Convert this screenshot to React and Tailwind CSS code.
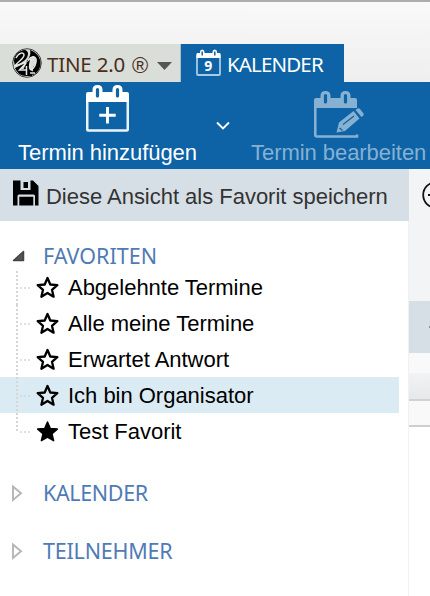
const ARIAL = "font-['Liberation_Sans',Arial,sans-serif]";
const TAHOMA = "font-['Noto_Sans',Tahoma,sans-serif]";

function Logo() {
  return (
    <svg className="ml-3 h-[30px] w-[30px] shrink-0" viewBox="0 0 30 30" fill="none">
      <circle cx="15" cy="15" r="14.3" fill="#d9ded8" stroke="#3b3f3b" strokeWidth="1" />
      <path d="M2 13C2 7 7 2 13 2C17 3 17 8 13 12L6 17L3 18Z" fill="#000" />
      <path d="M18 2C25 4 28.500 10 28.500 15C28.500 21 25 25 21 27L21 19C25 15 25 9 21 8L14 14C18 9 19 6 18 2Z" fill="#000" />
      <path d="M3 20L13 15L9 21H14V28C9 28 5 25 3 20Z" fill="#000" />
      <path d="M15 14L18 12V22L22 24L20 28H14L15 22H11Z" fill="#000" />
      <path d="M4 10C7 4 12 4 12 7C12 11 6 13 3 18L13 14.500M16 12C20 7 25 8 24 14C23 19 20 23 18 21C17 18 18 13 20 11M14 15L7.500 22H15M14.500 18V27M18 25H23" stroke="#e4e8e3" strokeWidth="1.500" />
    </svg>
  );
}

function SmallCalendar() {
  return (
    <svg className="ml-[15px] h-[28px] w-[25px] shrink-0" viewBox="0 0 25 28" fill="none">
      <rect x="1" y="6" width="23" height="20" rx="1" stroke="#a9cbe2" strokeWidth="1.800" />
      <path d="M0.500 5Q.5 4 1.500 4H4V3Q4 .5 6.200 .5T8.500 3V4H16.500V3Q16.500 .5 18.800 .5T21 3V4H23.500Q24.500 4 24.500 5V9H.5Z" fill="#fff" />
      <path d="M6.200 2.500V6.500M18.800 2.500V6.500" stroke="#0d63a6" strokeWidth="1.500" />
      <text x="12.200" y="21.500" textAnchor="middle" fill="#fff" fontFamily="Open Sans" fontWeight="700" fontSize="14">9</text>
    </svg>
  );
}

const CAL_TOP = "M0 9Q0 7 2 7H6.500V5Q6.500 0 11.500 0T16.500 5V7H26.500V5Q26.500 0 31.500 0T36.500 5V7H41Q43 7 43 9V17H0Z";

function CalendarAdd() {
  return (
    <svg className="h-[47px] w-[43px]" viewBox="0 0 43 47" fill="none">
      <rect x="1.200" y="10" width="40.600" height="35.500" rx="1.500" stroke="#eaf3f9" strokeWidth="2.600" />
      <path d={CAL_TOP} fill="#fff" />
      <path d="M11.500 4.500V11M31.500 4.500V11" stroke="#0d63a6" strokeWidth="3.200" strokeLinecap="round" />
      <path d="M21.500 22V38.500M13.300 30.200H29.700" stroke="#fff" strokeWidth="2.900" />
    </svg>
  );
}

function CalendarEdit() {
  return (
    <svg className="h-[47px] w-[50px]" viewBox="0 0 50 47" fill="none">
      <path d="M1.300 10V44Q1.300 45.500 3 45.500H43V43.500" stroke="#86b1d2" strokeWidth="2.600" />
      <path d={CAL_TOP} fill="#86b1d2" />
      <path d="M11.500 4.500V11M31.500 4.500V11" stroke="#0d63a6" strokeWidth="3.200" strokeLinecap="round" />
      <path d="M25 31.500L39.500 20L45.500 27.500L31 40L22.500 41.500Z" fill="#86b1d2" />
      <path d="M41.500 19L43.500 17.500Q45 17 46 18L49.500 22.500Q50 24 49 25L47.500 26Z" fill="#86b1d2" />
      <path d="M29 33.500L40 25M25.500 37L28.500 39.500" stroke="#0d63a6" strokeWidth="1.200" />
    </svg>
  );
}

function SaveIcon() {
  return (
    <svg className="-mt-[4px] ml-[13px] h-[26px] w-[26px] shrink-0" viewBox="0 0 26 26">
      <path
        d="M0 0.500H7.500V10H17.500V0.500H20L25.500 6V25.500H22V16Q22 14.500 20.500 14.500H6Q4.500 14.500 4.500 16V25.500H0Z"
        fill="#000"
      />
      <path d="M10.500 2H15V8H10.500ZM6.300 16.800H20.300V25.500H6.300Z" fill="#000" />
    </svg>
  );
}

function Star({ filled }) {
  return (
    <svg className="ml-[36px] mt-px h-[23px] w-[23px] shrink-0" viewBox="0 0 23 23">
      <path
        d="M11.500 2L14.300 8.500L21.300 9.100L16 13.800L17.600 20.700L11.500 17L5.400 20.700L7 13.800L1.700 9.100L8.700 8.500Z"
        fill={filled ? "#000" : "none"}
        stroke="#000"
        strokeWidth={filled ? 1.500 : 2.300}
        strokeLinejoin="round"
      />
    </svg>
  );
}

function Branch({ first, last }) {
  return (
    <svg className="absolute left-0 top-0 h-9 w-9" viewBox="0 0 36 36" fill="none" stroke="#d6d6d6" strokeWidth="2" strokeDasharray="2 2">
      <path d={last ? "M17 0V19" : first ? "M17 2V36" : "M17 0V36"} />
      <path d="M20 19H31" strokeWidth="1.500" />
    </svg>
  );
}

function Heading({ label, open, spacing }) {
  return (
    <div className="flex h-[26px] items-center">
      <svg className="ml-[11px] h-5 w-[14px] shrink-0" viewBox="0 0 14 20">
        {open ? (
          <path d="M2.500 14.500L12.500 5.500V14.500Z" fill="#555" stroke="#444" strokeWidth="1.500" strokeLinejoin="round" />
        ) : (
          <path d="M2 3.500L10 10.300L2 17Z" fill="#fff" stroke="#b5b5b5" strokeWidth="1.900" />
        )}
      </svg>
      <span className={`-mt-px ml-[18px] whitespace-nowrap text-[21.500px] leading-none text-[#4f7bb5] ${TAHOMA} ${spacing}`}>{label}</span>
    </div>
  );
}

const favorites = ["Abgelehnte Termine", "Alle meine Termine", "Erwartet Antwort", "Ich bin Organisator", "Test Favorit"];

export default function App() {
  return (
    <div className={`flex h-[596px] w-[430px] flex-col overflow-hidden bg-white ${ARIAL}`}>
      <header className="flex h-[82px] shrink-0 items-end border-t-2 border-[#adadad] bg-linear-to-b from-[#f9f9f9] to-[#eeeeef]">
        <div className="flex h-[38px] w-[181px] shrink-0 items-center border-r border-[#a9bfc5] bg-[#d9ded8]">
          <Logo />
          <span className={`ml-[5px] mt-[2px] flex w-[103px] items-center whitespace-nowrap text-[20.500px] leading-none tracking-[-0.200px] text-[#4a2d18] ${TAHOMA}`}>
            TINE 2.0
            <span className={`ml-[7px] mt-[4px] text-[22px] leading-none tracking-normal ${ARIAL}`}>®</span>
          </span>
          <svg className="ml-[7px] mt-[6px] h-2 w-[15px] shrink-0" viewBox="0 0 15 8"><path d="M0 0H15L7.500 8Z" fill="#555" /></svg>
        </div>
        <div className="flex h-[38px] w-[163px] shrink-0 items-center bg-[#0d63a6]">
          <SmallCalendar />
          <span className={`ml-[6px] mt-[2px] whitespace-nowrap text-[20.500px] leading-none tracking-[-0.850px] text-white ${TAHOMA}`}>KALENDER</span>
        </div>
      </header>

      <div className="flex h-[87px] shrink-0 bg-[#0d63a6] pt-[3px] text-[22px] leading-[25px]">
        <div className="flex w-[215px] shrink-0 flex-col items-center text-white">
          <CalendarAdd />
          <span className="mt-[8px] whitespace-nowrap tracking-[-0.050px]">Termin hinzufügen</span>
        </div>
        <svg className="mt-[36px] h-[9px] w-4 shrink-0" viewBox="0 0 16 9" fill="none" stroke="#fff" strokeWidth="1.900">
          <path d="M2 1.500L8 7.500L14 1.500" />
        </svg>
        <div className="ml-5 flex w-[179px] shrink-0 flex-col text-[#86b1d2]">
          <div className="ml-[63px] mt-[6px]"><CalendarEdit /></div>
          <span className="mt-[2px] whitespace-nowrap tracking-[-0.050px]">Termin bearbeiten</span>
        </div>
      </div>

      <main className="flex min-h-0 flex-1">
        <aside className="w-[409px] shrink-0 border-r border-[#f0f1f2]">
          <div className="flex h-[52px] w-[409px] items-center bg-[#d7dfe6]">
            <SaveIcon />
            <span className="ml-[7px] mt-[3px] whitespace-nowrap text-[22px] leading-none tracking-[-0.020px] text-[#333]">Diese Ansicht als Favorit speichern</span>
          </div>
          <div className="mt-[22px]">
            <Heading label="FAVORITEN" open spacing="tracking-[0px]" />
            <ul>
              {favorites.map((name, i) => (
                <li key={name} className={`relative flex h-9 w-[399px] items-center ${i === 3 ? "bg-[#dbebf4]" : ""}`}>
                  <Branch first={i === 0} last={i === 4} />
                  <Star filled={i === 4} />
                  <span className="ml-[9px] mt-[2px] whitespace-nowrap text-[22px] leading-none tracking-[-0.020px] text-black">{name}</span>
                </li>
              ))}
            </ul>
            <div className="mt-[31px]"><Heading label="KALENDER" spacing="tracking-[-0.350px]" /></div>
            <div className="mt-8"><Heading label="TEILNEHMER" spacing="tracking-[-0.200px]" /></div>
          </div>
        </aside>
        <section className="flex w-[21px] shrink-0 flex-col overflow-hidden">
          <div className="h-[132px] bg-[#f3f4f6]">
            <svg className="ml-[13px] mt-[12px] h-[28px] w-[28px]" viewBox="0 0 28 28" fill="none" stroke="#111" strokeWidth="1.800">
              <circle cx="14" cy="14" r="12.800" /><path d="M6 14H22" />
            </svg>
          </div>
          <div className="flex h-[52px] items-center justify-end bg-[#d7dfe6]">
            <span className="h-[2px] w-px bg-[#8b959d]" />
          </div>
          <div className="h-5 bg-[#f9f9f9]" />
          <div className="h-7 border-b-2 border-[#d1d2d4] bg-linear-to-b from-[#f2f3f4] to-[#e7e8e9]" />
          <div className="h-[26px] border-b-2 border-[#cfcfcf] bg-[#f9f9f9]" />
        </section>
      </main>
    </div>
  );
}
